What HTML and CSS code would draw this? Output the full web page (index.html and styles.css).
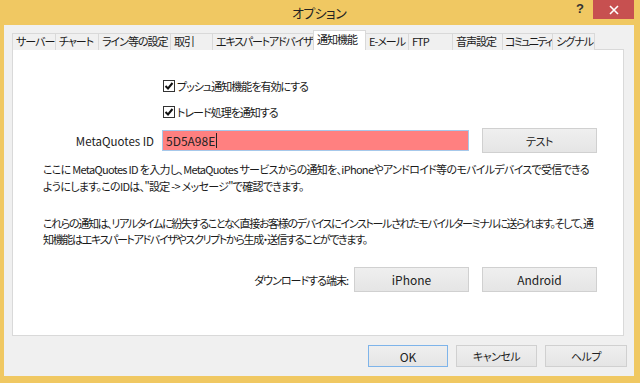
FILE: index.html
```html
<!DOCTYPE html>
<html lang="ja">
<head>
  <meta charset="UTF-8">
  <title>オプション</title>
  <link rel="stylesheet" href="styles.css">
</head>
<body>
  <div class="window">
    <div class="titlebar">
      <span class="title">オプション</span>
      <span class="help-btn">?</span>
      <span class="close-btn">
        <svg width="10" height="10" viewBox="0 0 10 10"><path d="M1 1 L9 9 M9 1 L1 9" stroke="#fff" stroke-width="1.6"/></svg>
      </span>
    </div>

    <div class="client">
      <div class="tabs">
        <div class="tab">サーバー</div>
        <div class="tab">チャート</div>
        <div class="tab">ライン等の設定</div>
        <div class="tab">取引</div>
        <div class="tab">エキスパートアドバイザ</div>
        <div class="tab active">通知機能</div>
        <div class="tab">E-メール</div>
        <div class="tab">FTP</div>
        <div class="tab">音声設定</div>
        <div class="tab">コミュニティ</div>
        <div class="tab">シグナル</div>
      </div>

      <div class="panel">
        <label class="check-row first">
          <span class="checkbox">
            <svg width="10" height="10" viewBox="0 0 10 10"><path d="M1.5 5 L4 7.5 L8.5 2" fill="none" stroke="#111" stroke-width="2"/></svg>
          </span>
          プッシュ通知機能を有効にする
        </label>
        <label class="check-row">
          <span class="checkbox">
            <svg width="10" height="10" viewBox="0 0 10 10"><path d="M1.5 5 L4 7.5 L8.5 2" fill="none" stroke="#111" stroke-width="2"/></svg>
          </span>
          トレード処理を通知する
        </label>

        <div class="form-row id-row">
          <span class="row-label latin">MetaQuotes ID</span>
          <div class="id-input"><span class="id-text">5D5A98E</span></div>
          <button class="btn wide">テスト</button>
        </div>

        <p class="note">ここに MetaQuotes ID を入力し、MetaQuotes サービスからの通知を、iPhoneやアンドロイド等のモバイルデバイスで受信できる<br>ようにします。このIDは、"設定 -&gt; メッセージ"で確認できます。</p>
        <p class="note second">これらの通知は、リアルタイムに紛失することなく直接お客様のデバイスにインストールされたモバイルターミナルに送られます。そして、通<br>知機能はエキスパートアドバイザやスクリプトから生成・送信することができます。</p>

        <div class="form-row dl-row">
          <span class="row-label">ダウンロードする端末:</span>
          <button class="btn wide latin">iPhone</button>
          <button class="btn wide latin">Android</button>
        </div>
      </div>

      <div class="footer">
        <button class="btn default latin">OK</button>
        <button class="btn cancel">キャンセル</button>
        <button class="btn help">ヘルプ</button>
      </div>
    </div>
  </div>
</body>
</html>
```

FILE: styles.css
```css
body {
  margin: 0;
  font-family: "Noto Sans CJK JP", "Noto Sans", sans-serif;
  font-size: 11px;
  letter-spacing: -0.8px;
  font-feature-settings: "palt";
  color: #1a1a1a;
  background: #f0c862;
}
.latin {
  font-size: 12px;
  letter-spacing: 0;
}
.window {
  width: 640px;
  height: 383px;
  background: #f0c862;
  display: flex;
  flex-direction: column;
}
.titlebar {
  position: relative;
  height: 25px;
  display: flex;
  justify-content: center;
  align-items: center;
}
.title {
  font-size: 13px;
  letter-spacing: -0.6px;
  color: #222;
  margin-left: -2px;
  margin-top: -1px;
}
.help-btn {
  position: absolute;
  left: 576px;
  top: 1px;
  font-family: "Liberation Sans", sans-serif;
  font-weight: bold;
  font-size: 13px;
  color: #333;
}
.close-btn {
  position: absolute;
  left: 593px;
  top: 0;
  width: 41px;
  height: 19px;
  background: #c75050;
  display: flex;
  align-items: center;
  justify-content: center;
}
.client {
  margin: 0 6px 7px 4px;
  flex: 1;
  background: #f0f0f0;
  padding: 6px 0 0 8px;
  display: flex;
  flex-direction: column;
}
.tabs {
  display: flex;
  align-items: flex-end;
  height: 19px;
  margin-bottom: -1px;
  position: relative;
  z-index: 1;
}
.tab {
  box-sizing: border-box;
  height: 17px;
  border: 1px solid #d9d9d9;
  border-bottom: none;
  margin-right: -1px;
  padding-left: 3px;
  line-height: 15px;
  background: #f0f0f0;
  white-space: nowrap;
  overflow: hidden;
  font-size: 11px;
  letter-spacing: -1px;
}
.tab:nth-child(1) { width: 44px; }
.tab:nth-child(2) { width: 44px; }
.tab:nth-child(3) { width: 73px; }
.tab:nth-child(4) { width: 43px; }
.tab:nth-child(5) { width: 102px; letter-spacing: -1.2px; }
.tab:nth-child(6) { width: 53px; }
.tab:nth-child(7) { width: 44px; }
.tab:nth-child(8) { width: 45px; }
.tab:nth-child(9) { width: 51px; }
.tab:nth-child(10) { width: 51px; padding-left: 2px; letter-spacing: -1.7px; }
.tab:nth-child(11) { width: 43px; }
.tab.active {
  height: 20px;
  background: #fff;
  line-height: 17px;
  position: relative;
  z-index: 2;
}
.panel {
  box-sizing: border-box;
  width: 612px;
  height: 287px;
  background: #fff;
  border: 1px solid #d9d9d9;
}
.check-row {
  display: flex;
  align-items: center;
  gap: 2px;
  height: 16px;
  margin: 10px 0 0 150px;
  letter-spacing: -1px;
}
.check-row.first {
  margin-top: 28px;
}
.checkbox {
  box-sizing: border-box;
  width: 12px;
  height: 12px;
  border: 1px solid #333;
  background: #fff;
  display: flex;
  align-items: center;
  justify-content: center;
}
.form-row {
  display: flex;
  justify-content: flex-end;
  align-items: center;
  gap: 13px;
  padding-right: 26px;
}
.id-row {
  margin-top: 8px;
}
.id-row .row-label {
  margin-right: -5px;
  font-size: 11.5px;
}
.dl-row {
  margin-top: 20px;
}
.dl-row .row-label {
  margin-right: -7px;
  letter-spacing: -1px;
}
.id-input {
  box-sizing: border-box;
  width: 307px;
  height: 21px;
  background: #ff8080;
  border: 1px solid #a6c8ea;
  padding-left: 3px;
  display: flex;
  align-items: center;
}
.id-text {
  border-right: 1px solid #222;
  line-height: 15px;
  padding-right: 1px;
  font-size: 12px;
  letter-spacing: 0;
  color: #222;
}
.btn {
  box-sizing: border-box;
  height: 25px;
  font-family: inherit;
  font-size: 11px;
  letter-spacing: -0.5px;
  font-feature-settings: "palt";
  color: #222;
  background: linear-gradient(#efefef, #e5e5e5);
  border: 1px solid #d0d0d0;
  padding: 0;
}
.btn.latin {
  font-size: 12px;
  letter-spacing: 0;
}
.btn.wide {
  width: 115px;
}
.note {
  margin: 8px 0 0 30px;
  line-height: 17px;
  white-space: nowrap;
  letter-spacing: -0.7px;
}
.note.second {
  margin-top: 20px;
  line-height: 16px;
  letter-spacing: -1.35px;
}
.footer {
  display: flex;
  justify-content: flex-end;
  gap: 8px;
  padding: 9px 7px 0 0;
}
.footer .btn {
  height: 22px;
}
.btn.default {
  width: 80px;
  border-color: #7eb4ea;
}
.btn.cancel {
  width: 81px;
}
.btn.help {
  width: 82px;
}
```
